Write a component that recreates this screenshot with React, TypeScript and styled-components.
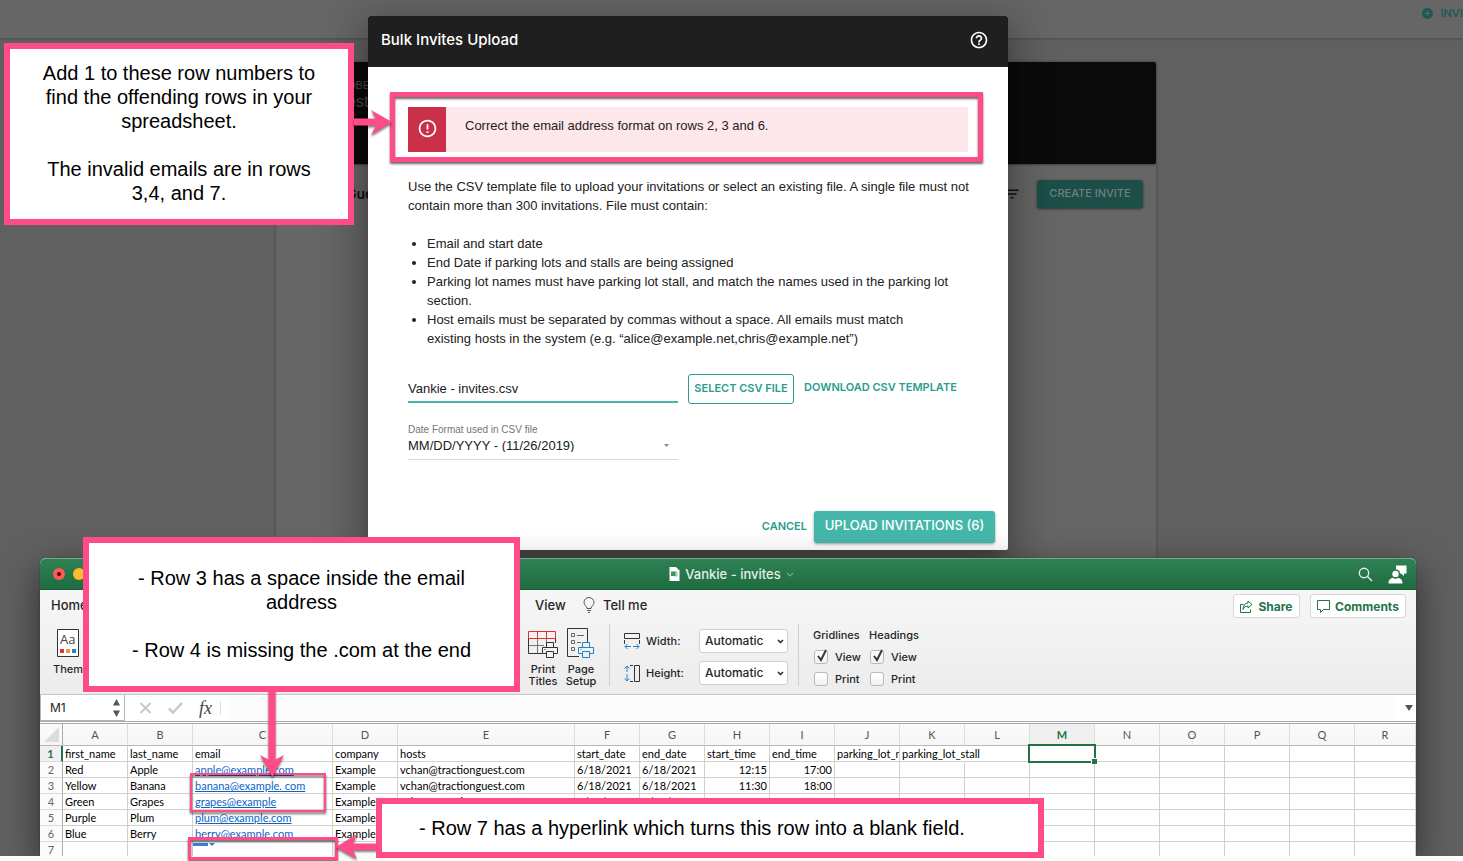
import React from "react";
import styled, { createGlobalStyle } from "styled-components";
import { MdAddCircle, MdErrorOutline, MdFilterList, MdHelpOutline } from "react-icons/md";

const sans = '"Liberation Sans", Arial, sans-serif';
const ui = 'Inter, "Liberation Sans", sans-serif';
const sheet = 'Lato, "Liberation Sans", sans-serif';
const teal = "#2a9d8f";
const pink = "#ff4b87";
const green = "#217346";

const Global = createGlobalStyle`
  *, *::before, *::after { box-sizing: border-box; }
  body { margin: 0; background: #fff; font-family: ${sans}; overflow-x: hidden; }
  button, input, select { font: inherit; color: inherit; margin: 0; }
  p, h1, h2, ul { margin: 0; padding: 0; }
`;

/* Each layer shares one grid cell, so the desktop grows with its tallest window. */
const Desktop = styled.main`
  position: relative;
  display: grid;
  grid-template-columns: minmax(0, 1fr);
  padding-bottom: 5px;
  > * { grid-area: 1 / 1; }
`;

/* ---------- Dimmed application page ---------- */

const Page = styled.div`
  display: flex;
  flex-direction: column;
  background: #606060;
  overflow: hidden;
`;

const TopBar = styled.header`
  display: flex;
  justify-content: flex-end;
  height: 38px;
  padding-top: 5px;
  background: #666;
  box-shadow: 0 1px 3px rgba(0, 0, 0, 0.2);
`;

const InviteLink = styled.a`
  display: flex;
  align-items: center;
  gap: 6px;
  height: 17px;
  margin-right: -21px;
  color: #1b5a52;
  font: 600 11px/17px ${ui};
  text-decoration: none;
`;

const GuestCard = styled.section`
  display: flex;
  flex-direction: column;
  flex: 1;
  width: 880px;
  margin: 24px 0 0 276px;
  background: #666;
  box-shadow: 0 0 3px rgba(0, 0, 0, 0.3);
`;

const Banner = styled.div`
  height: 102px;
  padding: 15px 0 0 63px;
  border-radius: 2px;
  background: #0b0b0b;
  color: #484848;
  box-shadow: 0 1px 2px rgba(0, 0, 0, 0.4);
`;

const BannerDate = styled.p`
  padding-left: 8px;
  font-size: 11px;
  line-height: 16px;
`;

const BannerName = styled.p`
  font-size: 16px;
  line-height: 18px;
`;

const GuestToolbar = styled.div`
  display: flex;
  align-items: center;
  gap: 16px;
  height: 60px;
  padding: 0 13px 0 70px;
  font: 600 14px/20px ${ui};
  color: #111;
`;

const ToolbarTitle = styled.h2`
  flex: 1;
  font: inherit;
`;

const CreateButton = styled.button`
  width: 106px;
  height: 28px;
  padding: 0 0 2px;
  border: 0;
  border-radius: 3px;
  background: #1b4f48;
  color: #72807d;
  font: 500 11px/16px ${ui};
  white-space: nowrap;
  box-shadow: 0 1px 3px rgba(0, 0, 0, 0.5);
`;

/* ---------- Upload dialog ---------- */

const Dialog = styled.section`
  display: flex;
  flex-direction: column;
  align-self: start;
  width: 640px;
  margin: 16px 0 0 368px;
  border-radius: 2px;
  background: #fff;
  color: #212121;
  box-shadow: 0 11px 15px -7px rgba(0, 0, 0, 0.2), 0 24px 38px 3px rgba(0, 0, 0, 0.14),
    0 9px 46px 8px rgba(0, 0, 0, 0.22);
`;

const DialogHeader = styled.header`
  display: flex;
  align-items: center;
  justify-content: space-between;
  height: 51px;
  padding: 0 19px 3px 13px;
  border-radius: 2px 2px 0 0;
  background: #1f1f1f;
  color: #fff;
`;

const DialogTitle = styled.h1`
  font: 500 15px/20px ${ui};
`;

const IconButton = styled.button`
  display: grid;
  place-items: center;
  padding: 0;
  border: 0;
  background: none;
  color: inherit;
`;

const DialogBody = styled.div`
  padding: 40px 40px 0;
  font-size: 13px;
  line-height: 19px;
`;

const Alert = styled.div`
  display: flex;
  height: 45px;
  margin-bottom: 25px;
  background: #fde7ea;
`;

const AlertIcon = styled.span`
  display: grid;
  place-items: center;
  width: 38px;
  padding-bottom: 2px;
  background: #ca3148;
  color: #fff;
`;

const AlertText = styled.p`
  padding: 9px 19px;
`;

const Intro = styled.p`
  margin-right: -12px;
`;

const Rules = styled.ul`
  max-width: 541px;
  margin: 19px 0 26px;
  padding-left: 19px;
`;

const FileRow = styled.div`
  display: flex;
  gap: 10px;
  height: 30px;
`;

const FileInput = styled.input`
  width: 270px;
  height: 29px;
  padding: 2px 0 0;
  border: 0;
  border-bottom: 2px solid #45b7aa;
  background: none;
  outline: none;
`;

const OutlineButton = styled.button`
  width: 106px;
  height: 30px;
  padding: 0 0 2px;
  border: 1px solid ${teal};
  border-radius: 3px;
  background: #fff;
  color: ${teal};
  font: 600 11px/16px ${ui};
  white-space: nowrap;
`;

const TextLink = styled.a`
  color: ${teal};
  font: 600 11px/26px ${ui};
  text-decoration: none;
  white-space: nowrap;
`;

const DateField = styled.label`
  display: flex;
  flex-direction: column;
  position: relative;
  width: 270px;
  margin-top: 20px;
  color: #757575;
  font-size: 10px;
  line-height: 12px;
`;

const DateSelect = styled.select`
  height: 24px;
  padding: 0 0 4px;
  border: 0;
  border-bottom: 1px solid #d8d8d8;
  background: none;
  appearance: none;
  color: #212121;
  font-size: 13px;
  outline: none;
`;

const Caret = styled.svg`
  position: absolute;
  right: 9px;
  bottom: 13px;
`;

const DialogFooter = styled.footer`
  display: flex;
  align-items: center;
  justify-content: flex-end;
  gap: 7px;
  padding: 51px 13px 7px;
`;

const CancelButton = styled.button`
  padding: 0 0 2px;
  border: 0;
  background: none;
  color: ${teal};
  font: 600 11px/16px ${ui};
`;

const UploadButton = styled.button`
  width: 181px;
  height: 32px;
  padding: 0 0 4px;
  border: 0;
  border-radius: 3px;
  background: #45b7aa;
  color: #fff;
  font: 500 13px/18px ${ui};
  white-space: nowrap;
  box-shadow: 0 1px 3px rgba(0, 0, 0, 0.4);
`;

/* ---------- Spreadsheet window ---------- */

const WindowLayer = styled.div`
  align-self: start;
  padding: 558px 47px 0 40px;
  overflow: hidden;
  pointer-events: none;
`;

const Window = styled.section`
  border-radius: 6px 6px 0 0;
  background: #fff;
  color: #262626;
  font-family: ${ui};
  box-shadow: 0 12px 36px rgba(0, 0, 0, 0.55), 0 0 1px rgba(0, 0, 0, 0.6);
  pointer-events: auto;
`;

const TitleBar = styled.header`
  display: grid;
  grid-template-columns: 1fr auto 1fr;
  align-items: center;
  height: 32px;
  padding: 0 9px 0 13px;
  border-top: 1px solid #74a98a;
  border-bottom: 1px solid #1a5c38;
  border-radius: 6px 6px 0 0;
  background: linear-gradient(#2f8154, #1e6c40);
  color: #e3eee8;
`;

const Lights = styled.div`
  display: flex;
  gap: 8px;
`;

const Light = styled.span<{ $color: string }>`
  display: grid;
  place-items: center;
  width: 12px;
  height: 12px;
  border-radius: 50%;
  background: ${(p) => p.$color};
`;

const LightDot = styled.span`
  width: 4px;
  height: 4px;
  border-radius: 50%;
  background: #4d0000;
`;

const FileName = styled.h2`
  display: flex;
  align-items: center;
  gap: 5px;
  padding-left: 3px;
  font: 500 13px/20px ${ui};
`;

const TitleActions = styled.div`
  display: flex;
  align-items: center;
  justify-content: flex-end;
  gap: 15px;
`;

const Ribbon = styled.div`
  height: 105px;
  border-bottom: 1px solid #c6c6c6;
  background: linear-gradient(#f6f6f6, #ececec);
`;

const TabRow = styled.nav`
  display: flex;
  align-items: center;
  height: 29px;
  padding: 0 10px 0 11px;
  font-size: 13px;
  font-weight: 500;
`;

const Tab = styled.button<{ $width: number }>`
  display: flex;
  align-items: center;
  gap: 8px;
  width: ${(p) => p.$width}px;
  padding: 0;
  border: 0;
  background: none;
  text-align: left;
`;

const Spacer = styled.span`
  flex: 1;
`;

const RibbonButton = styled.button<{ $width: number }>`
  display: flex;
  align-items: center;
  justify-content: center;
  gap: 5px;
  width: ${(p) => p.$width}px;
  height: 24px;
  margin: 3px 0 0 10px;
  padding: 0;
  border: 1px solid #d6d6d6;
  border-radius: 3px;
  background: #fff;
  color: ${green};
  font-size: 12px;
  font-weight: 700;
`;

const ToolRow = styled.div`
  display: flex;
  height: 75px;
  padding: 5px 0 0 9px;
  font-size: 11px;
  font-weight: 500;
  line-height: 12px;
`;

const ToolButton = styled.button<{ $start?: boolean }>`
  display: flex;
  flex-direction: column;
  align-items: ${(p) => (p.$start ? "flex-start" : "center")};
  gap: 5px;
  width: ${(p) => (p.$start ? 50 : 38)}px;
  height: 66px;
  padding: 4px 0 0 ${(p) => (p.$start ? 4 : 0)}px;
  border: 0;
  background: none;

  svg {
    flex: none;
    margin-left: ${(p) => (p.$start ? 4 : 0)}px;
  }
`;

const ThemeGroup = styled.div`
  width: 475px;
`;

const Divider = styled.span`
  width: 1px;
  height: 62px;
  background: #cfcfcf;
`;

const SizeGroup = styled.div`
  display: grid;
  grid-template-columns: 22px 53px 89px;
  grid-auto-rows: 24px;
  row-gap: 8px;
  align-items: center;
  padding: 5px 10px 0 14px;
`;

const SelectWrap = styled.div`
  position: relative;
  height: 24px;
`;

const SizeSelect = styled.select`
  width: 100%;
  height: 24px;
  padding: 0 5px;
  border: 1px solid #d0d0d0;
  border-radius: 3px;
  background: #fff;
  appearance: none;
  font-size: 12px;
  font-weight: 500;
  outline: none;
`;

const SelectCaret = styled.svg`
  position: absolute;
  right: 4px;
  top: 10px;
`;

const ShowGroup = styled.fieldset`
  display: flex;
  flex-direction: column;
  gap: 8px;
  width: 56px;
  margin: 0;
  padding: 5px 0 0;
  border: 0;
`;

const ShowTitle = styled.span`
  margin-bottom: 1px;
`;

const CheckLabel = styled.label`
  display: flex;
  align-items: center;
  gap: 6px;
  height: 14px;
  padding-left: 1px;
`;

const CheckWrap = styled.span`
  position: relative;
  width: 15px;
  height: 14px;
`;

const CheckBox = styled.input`
  display: block;
  width: 14px;
  height: 14px;
  border: 1px solid #b9b9b9;
  border-radius: 3px;
  background: linear-gradient(#fff, #f1f1f1);
  appearance: none;
`;

const CheckMark = styled.svg`
  position: absolute;
  left: 2px;
  top: -1px;
  pointer-events: none;
`;

const FormulaBar = styled.div`
  display: flex;
  align-items: center;
  height: 27px;
  border-bottom: 1px solid #ababab;
  background: #fff;
`;

const NameBox = styled.div`
  display: flex;
  align-items: center;
  width: 85px;
  height: 26px;
  padding: 0 4px 0 9px;
  border: 1px solid #b5b5b5;
  border-top: 0;
`;

const NameInput = styled.input`
  flex: 1;
  min-width: 0;
  padding: 0;
  border: 0;
  outline: none;
  font-size: 12px;
`;

const FormulaTools = styled.div`
  display: flex;
  align-items: center;
  gap: 16px;
  width: 96px;
  height: 14px;
  padding-left: 14px;
  border-right: 1px solid #dcdcdc;
`;

const Fx = styled.span`
  font: italic 18px/18px "Liberation Serif", serif;
  color: #444;
`;

const FormulaInput = styled.input`
  flex: 1;
  height: 22px;
  margin: 0 10px 0 7px;
  border: 0;
  background: #fcfcfc;
  outline: none;
`;

const MenuArrow = styled.svg`
  margin-right: 3px;
`;

const Grid = styled.table`
  width: 100%;
  margin-top: 1px;
  border-top: 1px solid #ababab;
  border-spacing: 0;
  table-layout: fixed;
  font: 11px/14px ${sheet};
  color: #000;
`;

const ColumnHead = styled.th<{ $active?: boolean }>`
  height: 22px;
  padding: 0;
  border-right: 1px solid #dedede;
  border-bottom: 1px solid ${(p) => (p.$active ? green : "#b8b8b8")};
  background: ${(p) => (p.$active ? "#efefef" : "linear-gradient(#fbfbfb, #f6f6f6)")};
  color: ${(p) => (p.$active ? green : "#555")};
  font-weight: ${(p) => (p.$active ? 700 : 400)};
`;

const CornerHead = styled(ColumnHead)`
  border-right-color: #ababab;
  line-height: 0;
  text-align: right;
`;

const RowHead = styled.th<{ $active?: boolean }>`
  height: 16px;
  padding: 0;
  border-right: ${(p) => (p.$active ? `2px solid ${green}` : "1px solid #ababab")};
  border-bottom: 1px solid #dcdcdc;
  background: ${(p) => (p.$active ? "#efefef" : "#fafafa")};
  color: ${(p) => (p.$active ? green : "#666")};
  font-weight: ${(p) => (p.$active ? 700 : 400)};
`;

/* The last row is cut short by the bottom edge of the window. */
const Row = styled.tr<{ $last?: boolean }>`
  ${(p) =>
    p.$last &&
    `
    & > th, & > td {
      height: 14px;
      border-bottom: 0;
      line-height: 12px;
      padding-top: 0;
      padding-bottom: 0;
      vertical-align: top;
    }
    & > th { padding-top: 2px; }
    & > td { padding-left: 0; }
  `}
`;

const Cell = styled.td<{ $right?: boolean; $spill?: boolean }>`
  height: 16px;
  padding: 1px 2px 0;
  border-right: 1px solid ${(p) => (p.$spill ? "transparent" : "#d0d0d0")};
  border-bottom: 1px solid #d0d0d0;
  overflow: ${(p) => (p.$spill ? "visible" : "hidden")};
  text-align: ${(p) => (p.$right ? "right" : "left")};
  white-space: nowrap;
`;

const MailLink = styled.a`
  color: #0b63c5;
  text-decoration: underline;
`;

const LinkMark = styled.svg`
  display: block;
  margin-top: 1px;
`;

const ActiveCell = styled.td`
  position: relative;
  padding: 0;
`;

const Selection = styled.span`
  position: absolute;
  inset: -2px -1px -1px -2px;
  border: 2px solid ${green};
  &::after {
    content: "";
    position: absolute;
    right: -3px;
    bottom: -3px;
    width: 6px;
    height: 6px;
    border: 1px solid #fff;
    border-width: 1px 0 0 1px;
    background: ${green};
  }
`;

/* ---------- Callouts laid over the desktop ---------- */

const Note = styled.aside<{ $x: number; $y: number; $w: number; $h: number; $left?: boolean }>`
  position: absolute;
  left: ${(p) => p.$x}px;
  top: ${(p) => p.$y}px;
  display: flex;
  flex-direction: column;
  justify-content: center;
  gap: 24px;
  width: ${(p) => p.$w}px;
  height: ${(p) => p.$h}px;
  padding: ${(p) => (p.$left ? "0 37px" : "0 28px 2px")};
  border: 6px solid ${pink};
  background: #fff;
  color: #000;
  font-size: 20px;
  line-height: 24px;
  text-align: ${(p) => (p.$left ? "left" : "center")};
`;

const Frame = styled.div<{ $x: number; $y: number; $w: number; $h: number; $line: number }>`
  position: absolute;
  left: ${(p) => p.$x}px;
  top: ${(p) => p.$y}px;
  width: ${(p) => p.$w}px;
  height: ${(p) => p.$h}px;
  border: ${(p) => p.$line}px solid ${pink};
  filter: drop-shadow(0 2px 1px rgba(0, 0, 0, 0.6));
  pointer-events: none;
`;

const Arrow = styled.svg<{ $x: number; $y: number }>`
  position: absolute;
  left: ${(p) => p.$x}px;
  top: ${(p) => p.$y}px;
  overflow: visible;
  fill: ${pink};
  filter: drop-shadow(0 2px 1px rgba(0, 0, 0, 0.5));
  pointer-events: none;
`;

const columns = "ABCDEFGHIJKLMNOPQR".split("");
const columnWidths = [65, 65, 140, 65, 177, 65, 65, 65, 65, 65, 65, 65, 65, 65, 65, 65, 65];

const rows: string[][] = [
  ["first_name", "last_name", "email", "company", "hosts", "start_date", "end_date", "start_time", "end_time", "parking_lot_name", "parking_lot_stall"],
  ["Red", "Apple", "apple@example.com", "Example", "vchan@tractionguest.com", "6/18/2021", "6/18/2021", "12:15", "17:00"],
  ["Yellow", "Banana", "banana@example. com", "Example", "vchan@tractionguest.com", "6/18/2021", "6/18/2021", "11:30", "18:00"],
  ["Green", "Grapes", "grapes@example", "Example", "vchan@tractionguest.com", "6/18/2021", "6/18/2021", "14:00", "18:00"],
  ["Purple", "Plum", "plum@example.com", "Example"],
  ["Blue", "Berry", "berry@example.com", "Example"],
  [],
];

function SheetCell({ row, col }: { row: number; col: number }) {
  const text = rows[row][col] ?? "";
  if (row === 0 && col === 12) {
    return (
      <ActiveCell>
        <Selection />
      </ActiveCell>
    );
  }
  if (col === 2 && row > 0 && text) {
    return (
      <Cell>
        <MailLink href={`mailto:${text}`}>{text}</MailLink>
      </Cell>
    );
  }
  if (col === 2 && row === 6) {
    return (
      <Cell>
        <LinkMark width="22" height="4" viewBox="0 0 22 4">
          <path d="M0 0h15v3H0zM16 0h6l-3 3z" fill="#3a7fd5" />
        </LinkMark>
      </Cell>
    );
  }
  return (
    <Cell $right={row > 0 && (col === 7 || col === 8)} $spill={row === 0 && col === 10}>
      {text}
    </Cell>
  );
}

function SizeField({ id, label, icon }: { id: string; label: string; icon: React.ReactNode }) {
  return (
    <>
      {icon}
      <label htmlFor={id}>{label}</label>
      <SelectWrap>
        <SizeSelect id={id}>
          <option>Automatic</option>
        </SizeSelect>
        <SelectCaret width="7" height="6" viewBox="0 0 7 6">
          <path d="M1 1l2.500 2.500L6 1" fill="none" stroke="#222" strokeWidth="1.5" />
        </SelectCaret>
      </SelectWrap>
    </>
  );
}

function Check({ label, on }: { label: string; on?: boolean }) {
  return (
    <CheckLabel>
      <CheckWrap>
        <CheckBox type="checkbox" defaultChecked={on} />
        {on && (
          <CheckMark width="12" height="13" viewBox="0 0 12 13">
            <path d="M2 7l3 4 5-10" fill="none" stroke="#3c3c3c" strokeWidth="2" />
          </CheckMark>
        )}
      </CheckWrap>
      {label}
    </CheckLabel>
  );
}

function Printer({ x, y, color }: { x: number; y: number; color: string }) {
  return (
    <g transform={`translate(${x} ${y})`} fill="#f2f2f2" stroke={color}>
      <path d="M4.5 5V.5h7V5" />
      <path d="M.5 5.500h15v6H.5z" />
      <path d="M4.500 9.500h7v6h-7z" />
      <path d="M2.500 7.500h1" />
    </g>
  );
}

export default function App() {
  return (
    <Desktop>
      <Global />
      <Page>
        <TopBar>
          <InviteLink href="#invite">
            <MdAddCircle size={13} />
            INVITES
          </InviteLink>
        </TopBar>
        <GuestCard>
          <Banner>
            <BannerDate>OBER</BannerDate>
            <BannerName>Test</BannerName>
          </Banner>
          <GuestToolbar>
            <ToolbarTitle>Guests</ToolbarTitle>
            <MdFilterList size={18} />
            <CreateButton>CREATE INVITE</CreateButton>
          </GuestToolbar>
        </GuestCard>
      </Page>

      <Dialog role="dialog" aria-labelledby="dialog-title">
        <DialogHeader>
          <DialogTitle id="dialog-title">Bulk Invites Upload</DialogTitle>
          <IconButton aria-label="Help">
            <MdHelpOutline size={20} />
          </IconButton>
        </DialogHeader>
        <DialogBody>
          <Alert role="alert">
            <AlertIcon>
              <MdErrorOutline size={21} />
            </AlertIcon>
            <AlertText>Correct the email address format on rows 2, 3 and 6.</AlertText>
          </Alert>
          <Intro>
            Use the CSV template file to upload your invitations or select an existing file. A single file must not
            contain more than 300 invitations. File must contain:
          </Intro>
          <Rules>
            <li>Email and start date</li>
            <li>End Date if parking lots and stalls are being assigned</li>
            <li>Parking lot names must have parking lot stall, and match the names used in the parking lot section.</li>
            <li>
              Host emails must be separated by commas without a space. All emails must match existing hosts in the
              system (e.g. “alice@example.net,chris@example.net”)
            </li>
          </Rules>
          <FileRow>
            <FileInput aria-label="CSV file" defaultValue="Vankie - invites.csv" />
            <OutlineButton>SELECT CSV FILE</OutlineButton>
            <TextLink href="#template">DOWNLOAD CSV TEMPLATE</TextLink>
          </FileRow>
          <DateField>
            Date Format used in CSV file
            <DateSelect>
              <option>MM/DD/YYYY - (11/26/2019)</option>
            </DateSelect>
            <Caret width="5" height="3" viewBox="0 0 5 3">
              <path d="M0 0h5L2.500 3z" fill="#8a8a8a" />
            </Caret>
          </DateField>
        </DialogBody>
        <DialogFooter>
          <CancelButton>CANCEL</CancelButton>
          <UploadButton>UPLOAD INVITATIONS (6)</UploadButton>
        </DialogFooter>
      </Dialog>

      <WindowLayer>
        <Window>
          <TitleBar>
            <Lights>
              <Light $color="#fc5b57">
                <LightDot />
              </Light>
              <Light $color="#fdbc2e" />
            </Lights>
            <FileName>
              <svg width="11" height="14" viewBox="0 0 11 14">
                <path d="M.5 0h6.500L10.500 3.500V14H.5z" fill="#fff" />
                <path d="M4.500 4.500h4v5h-4z" fill="#a9cfb9" />
                <path d="M2 4.500h4.500v4.500H2z" fill="#3f9162" />
              </svg>
              Vankie - invites
              <svg width="8" height="5" viewBox="0 0 8 5">
                <path d="M1 1l3 3 3-3" fill="none" stroke="#6fa888" strokeWidth="1.2" />
              </svg>
            </FileName>
            <TitleActions>
              <svg width="15" height="15" viewBox="0 0 15 15" fill="none" stroke="#e3eee8" strokeWidth="1.4">
                <circle cx="6" cy="6" r="4.700" />
                <path d="M9.500 9.500l4.500 4.500" />
              </svg>
              <svg width="19" height="19" viewBox="0 0 19 19" fill="#fff">
                <path d="M8 .5h10.500v8H16v2.500l-3-2.500h-1a4 4 0 0 0-4-4z" />
                <circle cx="7.500" cy="9" r="3.200" />
                <path d="M.5 18.500c0-4 2.500-5.500 4.500-5.500l2.500 1 2.500-1c2 0 4.500 1.500 4.500 5.500z" />
              </svg>
            </TitleActions>
          </TitleBar>

          <Ribbon>
            <TabRow>
              <Tab $width={484}>Home</Tab>
              <Tab $width={48}>View</Tab>
              <Tab $width={80}>
                <svg width="12" height="16" viewBox="0 0 12 16" fill="none" stroke="#555">
                  <path d="M4 11.500C4 9 1 8.500 1 5.500a5 5 0 0 1 10 0C11 8.500 8 9 8 11.500zM4 13.500h4M5 15.500h2" />
                </svg>
                Tell me
              </Tab>
              <Spacer />
              <RibbonButton $width={67}>
                <svg width="13" height="13" viewBox="0 0 13 13" fill="none" stroke={green}>
                  <path d="M3.500 4.500h-3v8h10v-3" />
                  <path d="M8 1l4 3.500L8 8V6C5.500 6 4 7 3 9.500 3 5.500 5 3.200 8 3z" />
                </svg>
                Share
              </RibbonButton>
              <RibbonButton $width={96}>
                <svg width="13" height="13" viewBox="0 0 13 13" fill="none" stroke={green}>
                  <path d="M.5.5h12v9h-6L3.500 12.500v-3h-3z" />
                </svg>
                Comments
              </RibbonButton>
            </TabRow>
            <ToolRow>
              <ThemeGroup>
                <ToolButton $start>
                  <svg width="22" height="30" viewBox="0 0 22 30">
                    <path d="M.5 1.500h21v27H.5z" fill="#fff" stroke="#333" />
                    <text x="3" y="16" fontSize="13" fontFamily="Open Sans, sans-serif" fill="#444">
                      Aa
                    </text>
                    <path d="M3 21h4v4H3z" fill="#e8312f" />
                    <path d="M9 21h4v4H9z" fill="#f2943a" />
                    <path d="M15 21h4v4h-4z" fill="#1e84d0" />
                  </svg>
                  Themes
                </ToolButton>
              </ThemeGroup>
              <ToolButton>
                <svg width="30" height="30" viewBox="0 0 30 30" fill="none">
                  <path d="M.5 17.500H16M9.500 10v15.500M18.500 10v5" stroke="#777" />
                  <path d="M.5 10v15.500H14M27.500 10v5" stroke="#333" />
                  <path d="M.5 3.500h27v7H.5zM9.500 3.500v7M18.500 3.500v7" stroke="#e8312f" />
                  <Printer x={14} y={14} color="#333" />
                </svg>
                Print Titles
              </ToolButton>
              <ToolButton>
                <svg width="28" height="30" viewBox="0 0 28 30" fill="none">
                  <path d="M12 28.500H.5V.5h20v14" stroke="#333" />
                  <path d="M4.500 5.500h3v3h-3zM4.500 12.500h3v3h-3zM4.500 19.500h3v3h-3zM10 7.500h7M10 14.500h4" stroke="#666" />
                  <Printer x={11} y={14} color="#1e84d0" />
                </svg>
                Page Setup
              </ToolButton>
              <Divider style={{ marginLeft: 9 }} />
              <SizeGroup>
                <SizeField
                  id="page-width"
                  label="Width:"
                  icon={
                    <svg width="16" height="17" viewBox="0 0 16 17" fill="none">
                      <path d="M.5.5h15v5H.5zM.5 7v4M15.500 7v4" stroke="#333" />
                      <path d="M3.500 11L1 13.500 3.500 16M12.500 11l2.500 2.500-2.500 2.500M1 13.500h6M9 13.500h6" stroke="#1e84d0" />
                    </svg>
                  }
                />
                <SizeField
                  id="page-height"
                  label="Height:"
                  icon={
                    <svg width="17" height="17" viewBox="0 0 17 17" fill="none">
                      <path d="M10.500.5h5v16h-5zM6 .5h3M6 16.500h3" stroke="#333" />
                      <path d="M.5 3.500L3 1l2.500 2.500M.5 13.500L3 16l2.500-2.500M3 1v6M3 9v7" stroke="#1e84d0" />
                    </svg>
                  }
                />
              </SizeGroup>
              <Divider style={{ marginRight: 14 }} />
              <ShowGroup>
                <ShowTitle>Gridlines</ShowTitle>
                <Check label="View" on />
                <Check label="Print" />
              </ShowGroup>
              <ShowGroup>
                <ShowTitle>Headings</ShowTitle>
                <Check label="View" on />
                <Check label="Print" />
              </ShowGroup>
            </ToolRow>
          </Ribbon>

          <FormulaBar>
            <NameBox>
              <NameInput aria-label="Cell name" defaultValue="M1" />
              <svg width="7" height="18" viewBox="0 0 7 18" fill="#555">
                <path d="M0 6.500L3.500 0 7 6.500zM0 11.500h7L3.500 18z" />
              </svg>
            </NameBox>
            <FormulaTools>
              <svg width="13" height="12" viewBox="0 0 13 12" fill="none" stroke="#c8c8c8" strokeWidth="2">
                <path d="M1.500 1l10 10M11.500 1l-10 10" />
              </svg>
              <svg width="15" height="12" viewBox="0 0 15 12" fill="none" stroke="#c8c8c8" strokeWidth="2.500">
                <path d="M1 6.500l4 4L14 1" />
              </svg>
              <Fx>fx</Fx>
            </FormulaTools>
            <FormulaInput aria-label="Formula" />
            <MenuArrow width="8" height="6" viewBox="0 0 8 6">
              <path d="M0 0h8L4 6z" fill="#555" />
            </MenuArrow>
          </FormulaBar>

          <Grid>
            <colgroup>
              <col width={23} />
              {columnWidths.map((w, i) => (
                <col key={i} width={w} />
              ))}
              <col />
            </colgroup>
            <thead>
              <tr>
                <CornerHead>
                  <svg width="18" height="16" viewBox="0 0 18 16">
                    <path d="M15 0v15H0z" fill="#dcdcdc" />
                  </svg>
                </CornerHead>
                {columns.map((c) => (
                  <ColumnHead key={c} $active={c === "M"}>
                    {c}
                  </ColumnHead>
                ))}
              </tr>
            </thead>
            <tbody>
              {rows.map((_, r) => (
                <Row key={r} $last={r === 6}>
                  <RowHead $active={r === 0}>{r + 1}</RowHead>
                  {columns.map((c, i) => (
                    <SheetCell key={c} row={r} col={i} />
                  ))}
                </Row>
              ))}
            </tbody>
          </Grid>
        </Window>
      </WindowLayer>

      <Note $x={4} $y={43} $w={350} $h={182}>
        <p>Add 1 to these row numbers to find the offending rows in your spreadsheet.</p>
        <p>The invalid emails are in rows 3,4, and 7.</p>
      </Note>
      <Frame $x={390} $y={92} $w={593} $h={70} $line={5} />
      <Arrow $x={354} $y={110} width="38" height="25">
        <path d="M0 8.500h22L17 0l21 12L17 25l5-9.500H0z" />
      </Arrow>

      <Frame $x={190} $y={773} $w={136} $h={39} $line={2} />
      <Arrow $x={260} $y={690} width="24" height="87">
        <path d="M8.500 0h7v69.500L24 65 12.500 87 0 65l8.500 4.500z" />
      </Arrow>
      <Note $x={83} $y={537} $w={437} $h={155}>
        <p>- Row 3 has a space inside the email address</p>
        <p>- Row 4 is missing the .com at the end</p>
      </Note>

      <Frame $x={188} $y={837} $w={150} $h={23} $line={3} />
      <Arrow $x={336} $y={834} width="42" height="25">
        <path d="M42 9.500H17L21 0 0 13l21 12-4-9H42z" />
      </Arrow>
      <Note $x={376} $y={798} $w={668} $h={60} $left>
        <p>- Row 7 has a hyperlink which turns this row into a blank field.</p>
      </Note>
    </Desktop>
  );
}
